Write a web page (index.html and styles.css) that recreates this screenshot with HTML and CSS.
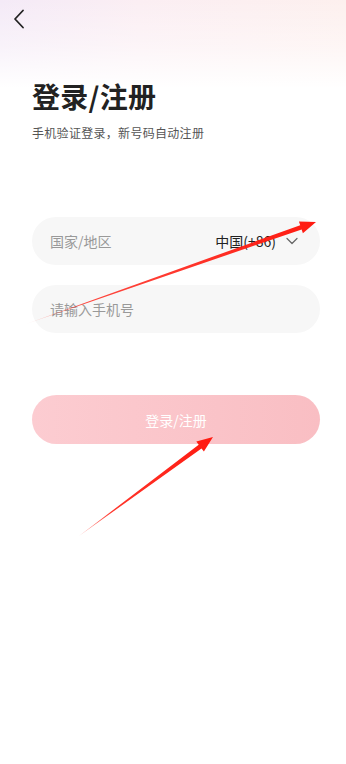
FILE: index.html
```html
<!DOCTYPE html>
<html lang="zh-CN">
<head>
<meta charset="utf-8">
<title>登录/注册</title>
<link rel="stylesheet" href="styles.css">
</head>
<body>
<div class="page">
  <div class="nav">
    <svg class="back" width="12" height="20" viewBox="0 0 12 20"><path d="M10 1.5 L2 10 L10 18.5" fill="none" stroke="#222" stroke-width="1.8" stroke-linecap="round" stroke-linejoin="round"/></svg>
  </div>
  <div class="content">
    <h1 class="title">登录/注册</h1>
    <p class="subtitle">手机验证登录，新号码自动注册</p>
    <div class="field">
      <span class="placeholder">国家/地区</span>
      <span class="region">中国(+86)
        <svg class="caret" width="12" height="8" viewBox="0 0 12 8"><path d="M1 1.5 L6 6.5 L11 1.5" fill="none" stroke="#666" stroke-width="1.2" stroke-linecap="round" stroke-linejoin="round"/></svg>
      </span>
    </div>
    <div class="field field-phone">
      <span class="placeholder">请输入手机号</span>
    </div>
    <div class="btn">登录/注册</div>
  </div>
  <svg class="arrows" width="346" height="764" viewBox="0 0 346 764">
    <defs>
      <linearGradient id="g1" gradientUnits="userSpaceOnUse" x1="26" y1="324" x2="316" y2="222">
        <stop offset="0" stop-color="#ff4a3f" stop-opacity="0.15"/>
        <stop offset="0.2" stop-color="#ff2a1f" stop-opacity="0.85"/>
        <stop offset="1" stop-color="#ff1a10"/>
      </linearGradient>
      <linearGradient id="g2" gradientUnits="userSpaceOnUse" x1="79" y1="536" x2="213" y2="437">
        <stop offset="0" stop-color="#ff4a3f" stop-opacity="0.5"/>
        <stop offset="0.25" stop-color="#ff2a1f" stop-opacity="0.95"/>
        <stop offset="1" stop-color="#ff1a10"/>
      </linearGradient>
    </defs>
    <polygon fill="url(#g1)" points="26,324 301.6,229.4 302.9,233.2 316,222 298.9,221.4 300.2,225.2"/>
    <polygon fill="url(#g2)" points="79,536 201.5,448.5 203.9,451.5 213,437 196.3,441.5 198.7,444.7"/>
  </svg>
</div>
</body>
</html>
```

FILE: styles.css
```css
html, body {
  margin: 0;
  padding: 0;
}
body {
  background: #fff;
  font-family: "Noto Sans CJK SC", "Noto Sans", sans-serif;
}
.page {
  position: relative;
  width: 346px;
  height: 764px;
  overflow: hidden;
  background:
    linear-gradient(to bottom, rgba(255,255,255,0) 0, rgba(255,255,255,0.4) 45px, #fff 88px),
    linear-gradient(to right, #f4eaf7 0, #fbeef3 40%, #fdf0ee 100%);
}
.nav {
  height: 38px;
  display: flex;
  align-items: center;
  padding-left: 13px;
}
.back {
  display: block;
}
.content {
  padding: 0 26px 0 32px;
}
.title {
  margin: 38px 0 0;
  font-size: 28px;
  line-height: 40px;
  font-weight: 700;
  color: #222;
  letter-spacing: 0.3px;
}
.subtitle {
  margin: 8px 0 0;
  font-size: 12px;
  line-height: 17px;
  color: #555;
  letter-spacing: 0.3px;
}
.field {
  margin-top: 76px;
  height: 48px;
  border-radius: 24px;
  background: #f7f7f7;
  display: flex;
  align-items: center;
  justify-content: space-between;
  padding: 0 22px 0 18px;
}
.field-phone {
  margin-top: 20px;
}
.placeholder {
  font-size: 14px;
  color: #999;
}
.region {
  display: flex;
  align-items: center;
  gap: 10px;
  font-size: 14px;
  color: #222;
}
.caret {
  display: block;
}
.btn {
  margin-top: 62px;
  height: 49px;
  border-radius: 25px;
  background: linear-gradient(to right, #fcccd1, #f9bec3);
  color: #fff;
  font-size: 14px;
  display: flex;
  align-items: center;
  justify-content: center;
}
.arrows {
  position: absolute;
  left: 0;
  top: 0;
  pointer-events: none;
}
```
